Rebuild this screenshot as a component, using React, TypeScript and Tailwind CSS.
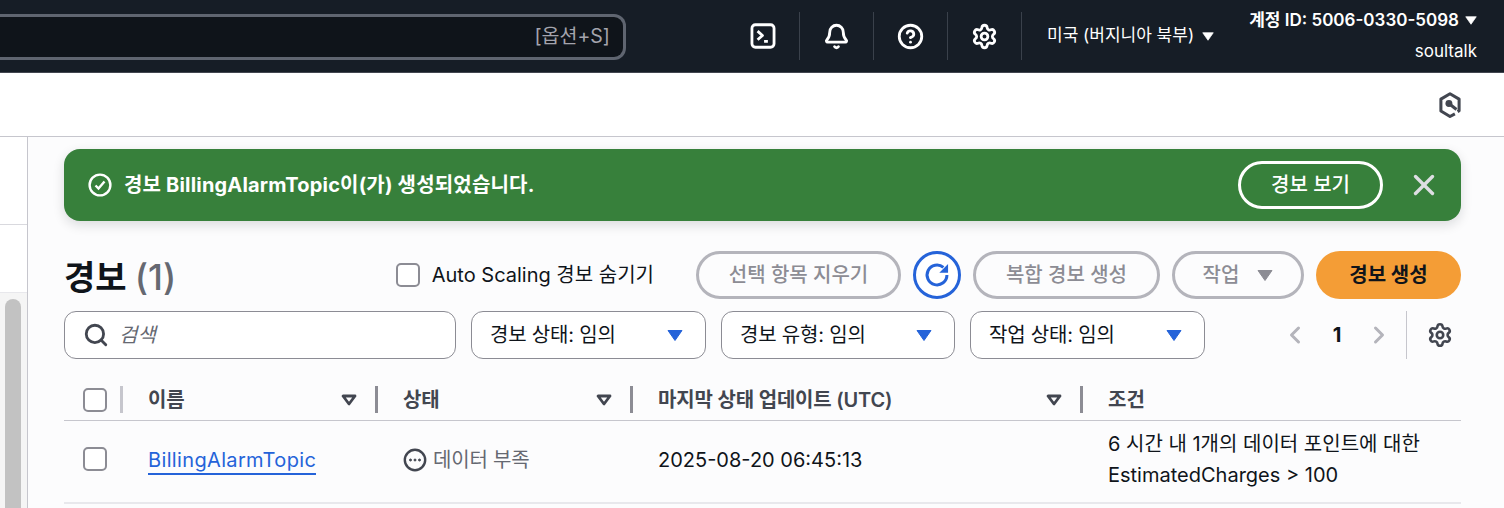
import { Bell, CircleHelp, Settings, X, Search, ChevronLeft, ChevronRight } from "lucide-react";

const font = { fontFamily: '"Inter", "Noto Sans CJK KR", sans-serif' };

function Tri({ className }: { className: string }) {
  return (
    <svg viewBox="0 0 16 12" className={className}>
      <path d="M1 1h14L8 11z" fill="currentColor" stroke="currentColor" strokeWidth="1" strokeLinejoin="round" />
    </svg>
  );
}

function SortIcon() {
  return (
    <svg viewBox="0 0 16 12" className="w-[16px] h-[12px] text-[#424650]">
      <path d="M2 2h12L8 10z" fill="none" stroke="currentColor" strokeWidth="2.8" strokeLinejoin="round" />
    </svg>
  );
}

function Terminal() {
  return (
    <svg viewBox="0 0 24 24" className="w-[26px] h-[26px]" fill="none" stroke="white" strokeWidth="2.6">
      <rect x="1.8" y="1.6" width="20.4" height="20.8" rx="3.2" />
      <path d="M7 7.5l4.5 4L7 15.5M13 17h3.5" strokeLinejoin="round" />
    </svg>
  );
}

function Hex() {
  return (
    <svg viewBox="0 0 24 24" className="w-[26px] h-[26px]" fill="none" stroke="#424650" strokeWidth="2.8">
      <path d="M16.5 20.2L12 22.6 3.6 17.6V6.6L12 1.6l8.4 5v10.6l-1.4.9" strokeLinejoin="round" />
      <circle cx="11" cy="10.6" r="3.2" fill="#424650" stroke="none" />
      <path d="M11 10.6l7 5.6" strokeWidth="2.8" />
    </svg>
  );
}

function Refresh() {
  return (
    <svg viewBox="0 0 24 24" className="w-[28px] h-[28px]" fill="none" stroke="#2563d9" strokeWidth="2.6">
      <path d="M20.5 12a8.5 8.5 0 1 1-3-6.5" />
      <path d="M21.5 2.5v7.5h-7.5z" fill="#2563d9" stroke="none" />
    </svg>
  );
}

function IconCell({ children }: { children: React.ReactNode }) {
  return (
    <div className="w-[74px] h-[48px] flex items-center justify-center border-r border-[#3a414b]">{children}</div>
  );
}

function GhostBtn({ children, className }: { children: React.ReactNode; className: string }) {
  return (
    <button className={`h-[48px] rounded-full border-[3px] border-[#b4b4bb] text-[#8c8c94] text-[20px] font-medium flex items-center justify-center ${className}`}>
      {children}
    </button>
  );
}

function Filter({ label, className }: { label: string; className: string }) {
  return (
    <div className={`h-[48px] rounded-[12px] border border-[#8c8c94] bg-white flex items-center justify-between pl-[18px] pr-[22px] text-[20px] tracking-[-0.2px] text-[#0f141a] ${className}`}>
      <span>{label}</span>
      <Tri className="w-[16px] h-[13px] text-[#2563d9]" />
    </div>
  );
}

function Box() {
  return <div className="w-[24px] h-[24px] rounded-[5px] border-2 border-[#8c8c94] bg-white" />;
}

function Th({ label, width, sep }: { label: string; width: string; sep: string }) {
  return (
    <div className={`flex items-center h-[27px] pl-[25px] ${width} relative`}>
      <span className="text-[20px] font-semibold tracking-[-0.2px] text-[#424650]">{label}</span>
      <span className="ml-auto mr-[18px] flex"><SortIcon /></span>
      <span className={`w-[3px] h-[27px] ${sep}`} />
    </div>
  );
}

export default function App() {
  return (
    <div style={font} className="w-[1504px] h-[508px] overflow-hidden bg-[#fcfcfd] flex flex-col">
      <header className="h-[73px] shrink-0 bg-[#161d26] border-b border-[#424650] flex items-center">
        <div className="w-[626px] h-[46px] mt-[1px] rounded-r-[12px] border-[3px] border-l-0 border-[#5f6570] bg-[#0f141a] flex items-center justify-end pr-[13px] text-[19.5px] text-[#a4a4ad]">
          [옵션+S]
        </div>
        <div className="flex ml-[100px]">
          <IconCell><Terminal /></IconCell>
          <IconCell><Bell className="w-[27px] h-[27px] text-white" strokeWidth={2.5} /></IconCell>
          <IconCell><CircleHelp className="w-[27px] h-[27px] text-white" strokeWidth={2.5} /></IconCell>
          <IconCell><Settings className="w-[27px] h-[27px] text-white" strokeWidth={2.5} /></IconCell>
        </div>
        <div className="ml-[25px] flex items-center text-[17px] text-white gap-[8px]">
          <span>미국 (버지니아 북부)</span>
          <Tri className="w-[12px] h-[9px] text-white" />
        </div>
        <div className="ml-auto mr-[27px] flex flex-col items-end text-white text-[17px] leading-[31px] -mt-[1px]">
          <div className="flex items-center gap-[6px] font-semibold">
            <span>계정 ID: 5006-0330-5098</span>
            <Tri className="w-[12px] h-[9px] text-white" />
          </div>
          <span>soultalk</span>
        </div>
      </header>
      <div className="h-[64px] shrink-0 bg-white border-b border-[#c6c6cd] flex items-center justify-end pr-[41px]">
        <Hex />
      </div>
      <div className="flex flex-1 min-h-0">
        <aside className="w-[28px] shrink-0 border-r border-[#c6c6cd] bg-white flex flex-col overflow-hidden">
          <div className="h-[88px] shrink-0 border-b border-[#d9d9de]" />
          <div className="h-[68px] shrink-0 border-b border-[#e8e8ec]" />
          <div className="flex-1 bg-[#f5f5f5] pl-[5px] pt-[6px]">
            <div className="w-[16px] h-[300px] rounded-full bg-[#c2c2c2]" />
          </div>
        </aside>
        <main className="flex-1 min-w-0 pl-[36px] pr-[43px] pt-[12px]">
          <div className="h-[72px] rounded-[16px] bg-[#37803b] shadow-[0_4px_12px_rgba(15,20,26,0.14)] flex items-center pl-[24px] pr-[24px] text-white">
            <svg viewBox="0 0 24 24" className="w-[24px] h-[24px] mr-[12px] -mt-[1px]" fill="none" stroke="white" strokeWidth="2.4">
              <circle cx="12" cy="12" r="10.4" />
              <path d="M7.5 12.5l3 3 6-7" />
            </svg>
            <span className="text-[20px] font-bold -mt-[1px] tracking-[0.18px]">경보 BillingAlarmTopic이(가) 생성되었습니다.</span>
            <button className="ml-auto mr-[24px] w-[145px] h-[48px] rounded-full border-[3px] border-white text-[20px] font-medium -mt-[1px]">경보 보기</button>
            <X className="w-[34px] h-[34px] -mr-[4px] text-[#dedee3]" strokeWidth={2.4} />
          </div>
          <div className="mt-[30px] h-[48px] flex items-center">
            <h1 className="text-[34px] font-bold text-[#0f141a] leading-none mt-[3px]">경보 <span className="text-[36px] font-medium text-[#656871]">(1)</span></h1>
            <div className="ml-auto flex items-center">
              <Box />
              <span className="ml-[12px] mr-[42px] text-[20px] text-[#0f141a]">Auto Scaling 경보 숨기기</span>
              <div className="flex gap-[12px]">
                <GhostBtn className="w-[205px]">선택 항목 지우기</GhostBtn>
                <button className="w-[48px] h-[48px] rounded-full border-[3px] border-[#2563d9] flex items-center justify-center bg-white"><Refresh /></button>
                <GhostBtn className="w-[187px]">복합 경보 생성</GhostBtn>
                <GhostBtn className="w-[132px] gap-[18px]">작업<Tri className="w-[16px] h-[13px] text-[#8c8c94]" /></GhostBtn>
                <button className="w-[145px] h-[48px] rounded-full bg-[#f49d36] text-[#0f141a] text-[20px] font-bold">경보 생성</button>
              </div>
            </div>
          </div>
          <div className="mt-[12px] h-[48px] flex items-center">
            <div className="w-[392px] h-[48px] rounded-[12px] border border-[#8c8c94] bg-white flex items-center pl-[18px] gap-[10px] text-[20px] italic text-[#656871]">
              <Search className="w-[26px] h-[26px] text-[#424650]" strokeWidth={2.6} />
              <span>검색</span>
            </div>
            <div className="flex gap-[15px] ml-[15px]">
              <Filter label="경보 상태: 임의" className="w-[235px]" />
              <Filter label="경보 유형: 임의" className="w-[234px]" />
              <Filter label="작업 상태: 임의" className="w-[235px]" />
            </div>
            <div className="flex-1 flex items-center h-[48px] justify-end">
              <ChevronLeft className="w-[28px] h-[28px] text-[#b4b4bb]" strokeWidth={2.6} />
              <span className="w-[56px] text-center text-[20px] font-bold text-[#0f141a]">1</span>
              <ChevronRight className="w-[28px] h-[28px] text-[#b4b4bb]" strokeWidth={2.6} />
              <span className="w-px h-[48px] bg-[#c6c6cd] ml-[13px]" />
              <Settings className="w-[26px] h-[26px] ml-[20px] mr-[8px] text-[#424650]" strokeWidth={2.4} />
            </div>
          </div>
          <div className="mt-[27px] h-[35px] border-b border-[#c6c6cd] flex items-start">
            <div className="w-[59px] h-[27px] flex items-center pl-[19px]">
              <Box />
              <span className="ml-auto w-[3px] h-[27px] bg-[#c6c6cd]" />
            </div>
            <Th label="이름" width="w-[255px]" sep="bg-[#8c8c94]" />
            <Th label="상태" width="w-[255px]" sep="bg-[#8c8c94]" />
            <Th label="마지막 상태 업데이트 (UTC)" width="w-[450px]" sep="bg-[#8c8c94]" />
            <div className="h-[27px] pl-[25px] flex items-center text-[20px] font-semibold text-[#424650]">조건</div>
          </div>
          <div className="h-[83px] pb-[4px] border-b-2 border-[#e8e8ec] flex items-center text-[20px] text-[#0f141a]">
            <div className="w-[59px] pl-[19px] flex -mt-[1px]"><Box /></div>
            <div className="w-[255px] pl-[25px]">
              <span className="text-[#2563d9] border-b-2 border-[#2563d9] leading-[26px] inline-block tracking-[0.35px]">BillingAlarmTopic</span>
            </div>
            <div className="w-[255px] pl-[25px] flex items-center gap-[6px] text-[#656871]">
              <svg viewBox="0 0 24 24" className="w-[24px] h-[24px]" fill="none" stroke="#424650" strokeWidth="2.4">
                <circle cx="12" cy="12" r="10.2" />
                <circle cx="7.5" cy="12" r="1" fill="#424650" strokeWidth="1" />
                <circle cx="12" cy="12" r="1" fill="#424650" strokeWidth="1" />
                <circle cx="16.5" cy="12" r="1" fill="#424650" strokeWidth="1" />
              </svg>
              <span className="tracking-[-0.2px]">데이터 부족</span>
            </div>
            <div className="w-[450px] pl-[25px]">2025-08-20 06:45:13</div>
            <div className="pl-[25px] leading-[31px] whitespace-nowrap mt-[1px]">
              <div>6 시간 내 1개의 데이터 포인트에 대한</div>
              <div>EstimatedCharges &gt; 100</div>
            </div>
          </div>
        </main>
      </div>
    </div>
  );
}
